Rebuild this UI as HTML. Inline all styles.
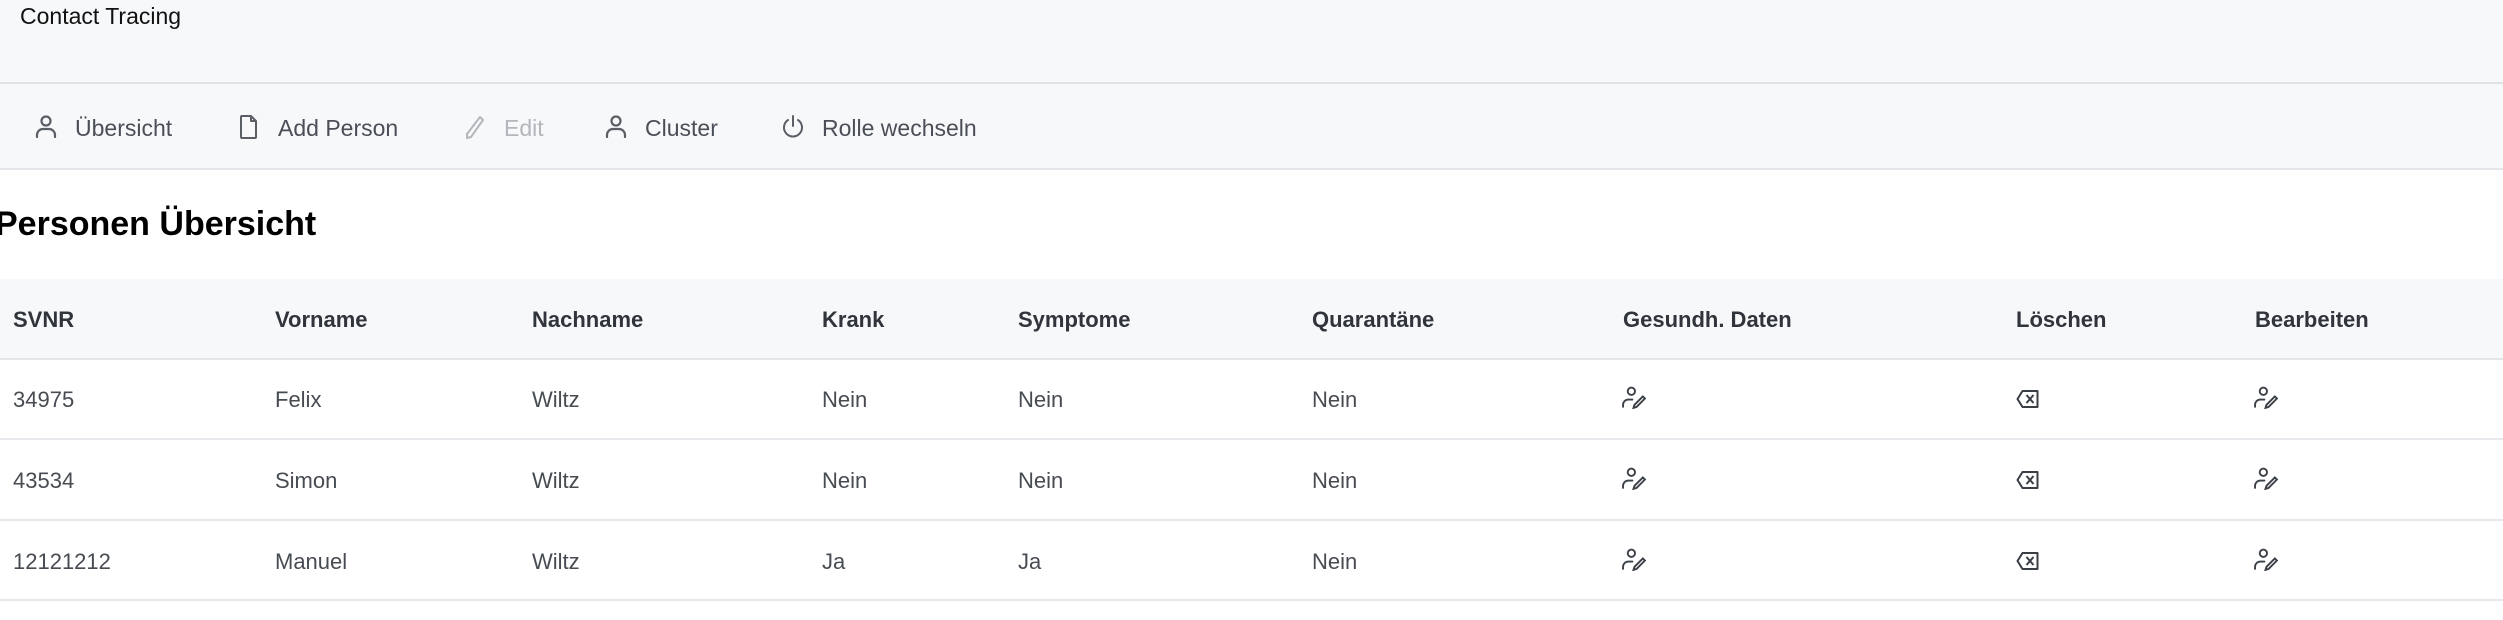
<!DOCTYPE html>
<html><head><meta charset="utf-8"><style>
*{margin:0;padding:0;box-sizing:border-box}
body{width:2503px;height:620px;background:#fff;font-family:"Liberation Sans",sans-serif;position:relative;overflow:hidden;color:#333}
.a{position:absolute;white-space:nowrap}
.top{position:absolute;left:0;top:0;width:2503px;height:84px;background:#f7f8fa;border-bottom:2px solid #dfe1e5}
.nav{position:absolute;left:0;top:84px;width:2503px;height:86px;background:#f7f8fa;border-bottom:2px solid #e4e6ea}
.ni{position:absolute;top:116px;font-size:23px;color:#4a4f57;line-height:24px}
.ni svg{position:absolute;left:-42px;top:-2px}
.th{position:absolute;left:0;top:279px;width:2503px;height:81px;background:#f7f8fa;border-bottom:2px solid #e4e6ea}
.rl{position:absolute;left:0;width:2503px;height:2px;background:#e7e8eb}
.h{position:absolute;top:307px;font-size:22px;font-weight:bold;color:#30343b}
.c{position:absolute;font-size:22px;color:#474b52}
</style></head><body>
<div class="top"></div>
<div class="a" style="left:20px;top:3px;font-size:23px;color:#111">Contact Tracing</div>
<div class="nav"></div>
<svg width="0" height="0" style="position:absolute"><defs>
<g id="user" fill="none" stroke="#5a5f66" stroke-width="2.2" stroke-linecap="round"><circle cx="12" cy="7" r="4.5"/><path d="M3 23v-2a6 6 0 0 1 6-6h6a6 6 0 0 1 6 6v2"/></g>
</defs></svg>
<div class="ni" style="left:75px"><svg width="26" height="26" viewBox="0 0 24 26"><use href="#user"/></svg>Übersicht</div>
<div class="ni" style="left:278px"><svg width="26" height="26" viewBox="0 0 24 26"><path d="M5 2h9l5 5v16a1 1 0 0 1-1 1H5a1 1 0 0 1-1-1V3a1 1 0 0 1 1-1z M14 2v5h5" fill="none" stroke="#5a5f66" stroke-width="2" stroke-linejoin="round"/></svg>Add Person</div>
<div class="ni" style="left:504px;color:#b3b6bb"><svg width="26" height="26" viewBox="0 0 24 26"><path d="M17 3l3 3L8 23l-4 1 0-4z" fill="none" stroke="#b3b6bb" stroke-width="2" stroke-linejoin="round"/></svg>Edit</div>
<div class="ni" style="left:645px"><svg width="26" height="26" viewBox="0 0 24 26"><use href="#user"/></svg>Cluster</div>
<div class="ni" style="left:822px"><svg width="26" height="26" viewBox="0 0 24 26"><path d="M7 6a9 9 0 1 0 10 0M12 2v10" fill="none" stroke="#5a5f66" stroke-width="2" stroke-linecap="round"/></svg>Rolle wechseln</div>
<div class="a" style="left:-5px;top:205px;font-size:34px;font-weight:bold;color:#000">Personen Übersicht</div>
<div class="th"></div>
<div class="h" style="left:13px">SVNR</div>
<div class="h" style="left:275px">Vorname</div>
<div class="h" style="left:532px">Nachname</div>
<div class="h" style="left:822px">Krank</div>
<div class="h" style="left:1018px">Symptome</div>
<div class="h" style="left:1312px">Quarantäne</div>
<div class="h" style="left:1623px">Gesundh. Daten</div>
<div class="h" style="left:2016px">Löschen</div>
<div class="h" style="left:2255px">Bearbeiten</div>
<div class="rl" style="top:438px"></div>
<div class="rl" style="top:519px"></div>
<div class="rl" style="top:599px"></div>
<svg width="0" height="0" style="position:absolute"><defs>
<g id="ue" fill="none" stroke="#3a3f46" stroke-width="1.8" stroke-linecap="round"><circle cx="9" cy="5" r="3.5"/><path d="M1 20v-2a5 5 0 0 1 5-5h4"/><path d="M20 10l2 2-8 8-3 1 1-3z"/></g>
<g id="del" fill="none" stroke="#3a3f46" stroke-width="2" stroke-linejoin="round"><path d="M7 3h15v16H7l-5-8z"/><path d="M11 7l7 8M18 7l-7 8"/></g>
</defs></svg>
<div class="c" style="left:13px;top:387px">34975</div><div class="c" style="left:275px;top:387px">Felix</div><div class="c" style="left:532px;top:387px">Wiltz</div><div class="c" style="left:822px;top:387px">Nein</div><div class="c" style="left:1018px;top:387px">Nein</div><div class="c" style="left:1312px;top:387px">Nein</div>
<div class="c" style="left:13px;top:468px">43534</div><div class="c" style="left:275px;top:468px">Simon</div><div class="c" style="left:532px;top:468px">Wiltz</div><div class="c" style="left:822px;top:468px">Nein</div><div class="c" style="left:1018px;top:468px">Nein</div><div class="c" style="left:1312px;top:468px">Nein</div>
<div class="c" style="left:13px;top:549px">12121212</div><div class="c" style="left:275px;top:549px">Manuel</div><div class="c" style="left:532px;top:549px">Wiltz</div><div class="c" style="left:822px;top:549px">Ja</div><div class="c" style="left:1018px;top:549px">Ja</div><div class="c" style="left:1312px;top:549px">Nein</div>
<svg class="a" style="left:1622px;top:386px" width="25" height="23" viewBox="0 0 24 22"><use href="#ue"/></svg>
<svg class="a" style="left:1622px;top:467px" width="25" height="23" viewBox="0 0 24 22"><use href="#ue"/></svg>
<svg class="a" style="left:1622px;top:548px" width="25" height="23" viewBox="0 0 24 22"><use href="#ue"/></svg>
<svg class="a" style="left:2015px;top:388px" width="25" height="22" viewBox="0 0 24 22"><use href="#del"/></svg>
<svg class="a" style="left:2015px;top:469px" width="25" height="22" viewBox="0 0 24 22"><use href="#del"/></svg>
<svg class="a" style="left:2015px;top:550px" width="25" height="22" viewBox="0 0 24 22"><use href="#del"/></svg>
<svg class="a" style="left:2254px;top:386px" width="25" height="23" viewBox="0 0 24 22"><use href="#ue"/></svg>
<svg class="a" style="left:2254px;top:467px" width="25" height="23" viewBox="0 0 24 22"><use href="#ue"/></svg>
<svg class="a" style="left:2254px;top:548px" width="25" height="23" viewBox="0 0 24 22"><use href="#ue"/></svg>
</body></html>
